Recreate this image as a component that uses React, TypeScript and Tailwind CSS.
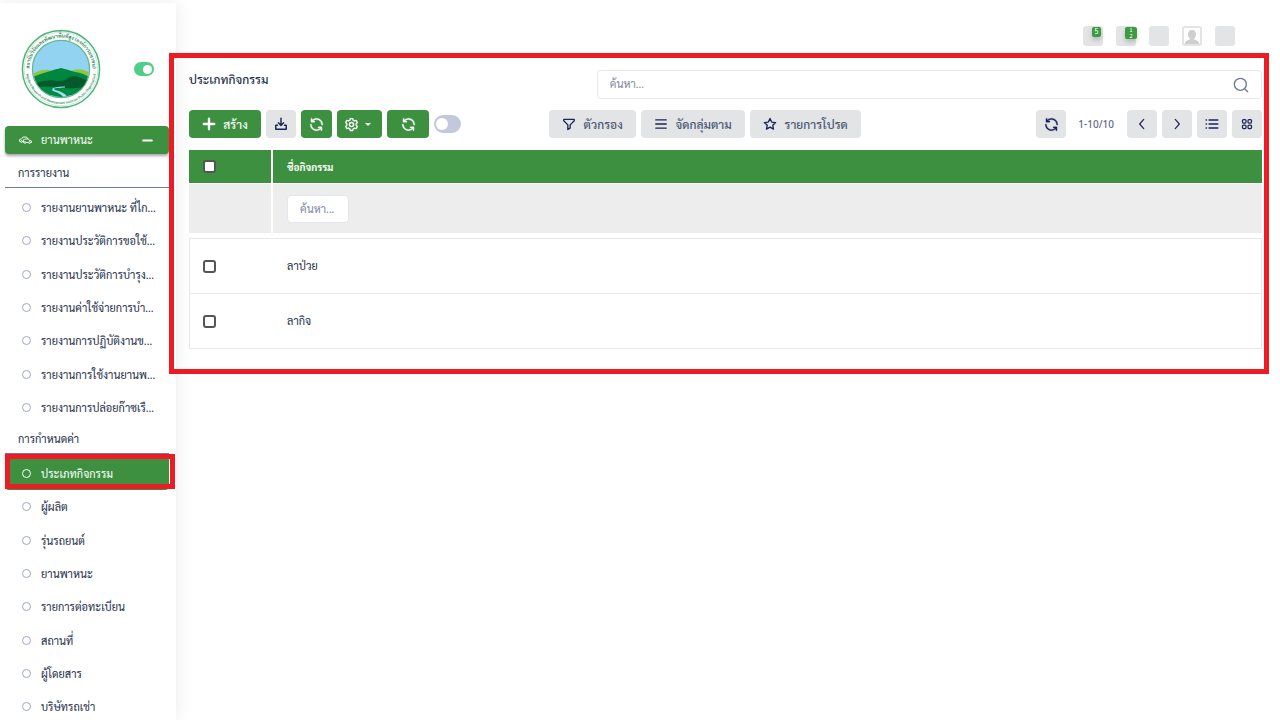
import type { ReactNode } from 'react'
import { LuMinus } from 'react-icons/lu'
import { clsx } from 'clsx'

const reports = [
  'รายงานยานพาหนะ ที่ไก...',
  'รายงานประวัติการขอใช้...',
  'รายงานประวัติการบำรุง...',
  'รายงานค่าใช้จ่ายการบำ...',
  'รายงานการปฏิบัติงานข...',
  'รายงานการใช้งานยานพ...',
  'รายงานการปล่อยก๊าซเรื...',
]

const settings = [
  'ประเภทกิจกรรม',
  'ผู้ผลิต',
  'รุ่นรถยนต์',
  'ยานพาหนะ',
  'รายการต่อทะเบียน',
  'สถานที่',
  'ผู้โดยสาร',
  'บริษัทรถเช่า',
]

const rows = ['ลาป่วย', 'ลากิจ']

function Logo() {
  return (
    <svg viewBox="0 0 80 80" className="size-20 overflow-visible" role="img" aria-label="โลโก้">
      <defs>
        <clipPath id="scene">
          <circle cx="40" cy="40" r="28" />
        </clipPath>
        <path id="ring-top" d="M9.500 48 A31.500 31.500 0 1 1 70.500 48" />
        <path id="ring-bottom" d="M5 36 A35.200 35.200 0 1 0 75 36" />
      </defs>
      <circle cx="40" cy="40" r="38.600" fill="#fff" stroke="#4db57c" strokeWidth="1.500" />
      <circle cx="40" cy="40" r="36.800" fill="none" stroke="#a9dcc0" strokeWidth="0.600" />
      <circle cx="40" cy="40" r="28.600" fill="#93d3f2" stroke="#5db98a" strokeWidth="1.200" />
      <g clipPath="url(#scene)">
        <path d="M10 46 Q22 38 32 42 L50 42 Q60 37 72 46 V60 H10Z" fill="#8cc63f" />
        <path d="M8 50 Q18 45 26 43 Q35 40 40 39 Q48 41 54 43 Q62 44 72 50 V62 H8Z" fill="#00873f" />
        <path d="M8 56 Q20 52 30 51 Q38 53 44 51 Q52 45 58 48 Q66 52 72 53 V66 H8Z" fill="#045a2b" />
        <path d="M8 59 Q28 56 44 59 Q60 60 72 55 V72 H8Z" fill="#008a45" />
        <path d="M44 58.500 Q30 58.500 34 61 Q46 64 47 70 L43 70 Q42 65 32 62 Q28 58 44 57.500Z" fill="#a8def5" />
      </g>
      <text fill="#23804c" fontSize="5" fontWeight="600" textAnchor="middle">
        <textPath href="#ring-top" startOffset="50%">
          สถาบันวิจัยและพัฒนาพื้นที่สูง (องค์การมหาชน)
        </textPath>
      </text>
      <text fill="#23804c" fontSize="3.300" fontWeight="600" textAnchor="middle">
        <textPath href="#ring-bottom" startOffset="50%">
          Highland Research and Development Institute (Public Organization)
        </textPath>
      </text>
    </svg>
  )
}

function SyncIcon() {
  return (
    <svg viewBox="0 0 24 24" className="size-[15px]" fill="currentColor" stroke="currentColor" strokeWidth="0.500">
      <path d="M19.910 15.510H15.380a1 1 0 0 0 0 2h2.400A8 8 0 0 1 4 12a1 1 0 1 0-2 0 10 10 0 0 0 16.880 7.230V21a1 1 0 0 0 2 0v-4.500a1 1 0 0 0-.970-.990ZM12 2a10 10 0 0 0-6.880 2.770V3a1 1 0 0 0-2 0v4.500a1 1 0 0 0 1 1h4.500a1 1 0 0 0 0-2h-2.400A8 8 0 0 1 20 12a1 1 0 0 0 2 0A10 10 0 0 0 12 2Z" />
    </svg>
  )
}

function StrokeIcon({ d, className = 'size-[14px]', width = 2 }: { d: string; className?: string; width?: number }) {
  return (
    <svg
      viewBox="0 0 24 24"
      className={className}
      fill="none"
      stroke="currentColor"
      strokeWidth={width}
      strokeLinecap="round"
      strokeLinejoin="round"
    >
      <path d={d} />
    </svg>
  )
}

function GearIcon() {
  return (
    <svg viewBox="0 0 24 24" className="size-[15px]" fill="none" stroke="currentColor" strokeWidth="2.200" strokeLinejoin="round">
      <path d="M10 2.500h4l.7 2.700 2 1.100 2.700-.8 2 3.500-2 1.900v2.200l2 1.900-2 3.500-2.700-.8-2 1.100-.7 2.700h-4l-.7-2.700-2-1.100-2.700.8-2-3.500 2-1.900v-2.200l-2-1.900 2-3.500 2.700.8 2-1.100Z" />
      <circle cx="12" cy="12" r="3.300" />
    </svg>
  )
}

function CarsIcon() {
  return (
    <svg viewBox="0 0 26 16" className="h-2 w-[13px]" fill="none" stroke="currentColor" strokeWidth="1.800" strokeLinejoin="round">
      <path d="M8 11H6M3 11H1V7l4-1 3-4h7l3 4" />
      <path d="M10 13H9V8l2-2h8l2 3 4 1v3h-2M19 13h-5" />
      <circle cx="5" cy="11" r="1.800" />
      <circle cx="12" cy="13" r="1.800" />
      <circle cx="21" cy="13" r="1.800" />
    </svg>
  )
}

function Button({ label, green, className, children }: { label?: string; green?: boolean; className?: string; children: ReactNode }) {
  return (
    <button
      type="button"
      aria-label={label}
      className={clsx(
        'flex h-7 items-center justify-center rounded-[4px]',
        green ? 'bg-[#3c9040] text-white' : 'bg-[#e2e4e6] text-[#1c2557]',
        className,
      )}
    >
      {children}
    </button>
  )
}

function MenuItem({ text, active }: { text: string; active?: boolean }) {
  return (
    <li className={clsx('relative nth-[3n]:mt-px', active && 'rounded bg-[#3c9040]')}>
      <a
        href="#"
        className={clsx('flex h-[33px] items-center gap-[10px] pl-[17px]', active ? 'text-white' : 'text-[#252f4a]')}
      >
        <span
          className={clsx('size-[9px] shrink-0 rounded-full border', active ? 'border-white' : 'border-[#9fa6c8]')}
        />
        <span className="truncate leading-6">{text}</span>
      </a>
      {active && (
        <span className="pointer-events-none absolute -top-[3px] -right-[6px] bottom-[1px] left-0 z-20 border-[5px] border-[#ed1c24]" />
      )}
    </li>
  )
}

function MenuGroup({ title, children }: { title: string; children: ReactNode }) {
  return (
    <>
      <h2 className="flex h-[30px] items-center border-b border-[#6d7bab] pt-[2px] pl-[13px] text-[#252f4a]">{title}</h2>
      <ul className="pt-[3px]">{children}</ul>
    </>
  )
}

function Sidebar() {
  return (
    <aside className="mt-[3px] w-44 shrink-0 bg-white pr-[7px] pl-[5px] text-[11px] shadow-[0_0_16px_rgba(0,0,0,0.09)]">
      <div className="flex items-center justify-between pt-[26px] pr-[15px] pb-[17px] pl-4">
        <Logo />
        <label className="flex">
          <input type="checkbox" defaultChecked aria-label="เมนู" className="sr-only" />
          <span className="flex h-[14px] w-5 items-center justify-end rounded-full bg-[#50cd89] pr-[2px]">
            <span className="size-[9px] rounded-full bg-white" />
          </span>
        </label>
      </div>

      <button
        type="button"
        className="flex h-7 w-full items-center rounded bg-[#3c9040] pr-[14px] pl-[14px] text-white shadow-[0_2px_3px_rgba(0,0,0,0.35)]"
      >
        <CarsIcon />
        <span className="ml-[9px]">ยานพาหนะ</span>
        <LuMinus className="ml-auto size-[15px]" strokeWidth={3} />
      </button>

      <nav className="pt-1">
        <MenuGroup title="การรายงาน">
          {reports.map((text) => (
            <MenuItem key={text} text={text} />
          ))}
        </MenuGroup>
        <MenuGroup title="การกำหนดค่า">
          {settings.map((text, index) => (
            <MenuItem key={text} text={text} active={index === 0} />
          ))}
        </MenuGroup>
      </nav>
    </aside>
  )
}

function Topbar() {
  return (
    <header className="flex h-[53px] items-center justify-end gap-[13px] pt-[19px] pr-[45px]">
      <button type="button" aria-label="การแจ้งเตือน" className="relative size-5 rounded-[3px] bg-[#e2e4e6]">
        <span className="absolute top-[1px] right-[2px] flex h-[10px] w-[9px] items-center justify-center rounded-[2px] bg-[#3c9a40] text-[7px] text-white shadow-[0_3px_5px_rgba(0,0,0,0.2)]">
          5
        </span>
      </button>
      <button type="button" aria-label="ข้อความ" className="relative size-5 rounded-[3px] bg-[#e2e4e6]">
        <span className="absolute top-[1px] -right-[1px] flex h-3 w-3 flex-col items-center justify-center rounded-[2px] bg-[#3c9a40] text-[6px] leading-[6px] text-white shadow-[0_3px_5px_rgba(0,0,0,0.2)]">
          <span>1</span>
          <span>2</span>
        </span>
      </button>
      <button type="button" aria-label="แอป" className="size-5 rounded-[3px] bg-[#e2e4e6]" />
      <button
        type="button"
        aria-label="โปรไฟล์"
        className="flex size-5 items-end justify-center rounded-[3px] border-2 border-[#e2e4e6]"
      >
        <svg viewBox="0 0 18 16" className="h-[14px] w-full" fill="#cfcfcf">
          <path d="M9 0c3.200 0 4.600 2 4.600 4.800 0 2.200-.9 3.900-2.100 4.800v1.200c2.300.9 5.300 1.400 5.800 5.200H.7C1.200 12.200 4.200 11.700 6.500 10.800V9.600C5.300 8.700 4.400 7 4.400 4.800 4.400 2 5.800 0 9 0Z" />
        </svg>
      </button>
      <button type="button" aria-label="ตั้งค่า" className="size-5 rounded-[3px] bg-[#e2e4e6]" />
    </header>
  )
}

function Toolbar() {
  return (
    <div className="mt-[11px] flex text-xs font-medium">
      <div className="flex w-1/3 items-center gap-[5px]">
        <Button green className="w-[72px] gap-[7px]">
          <StrokeIcon d="M12 3v18M3 12h18" width={4} />
          สร้าง
        </Button>
        <Button label="ดาวน์โหลด" className="w-[30px]">
          <StrokeIcon d="M12 2v12M7.500 10l4.500 4.500 4.500-4.500M6 14H3v7h18v-7h-3" width={2.5} />
        </Button>
        <Button green label="รีเฟรช" className="w-[31px]">
          <SyncIcon />
        </Button>
        <Button green label="ตั้งค่า" className="w-[45px] gap-[6px] pr-1">
          <GearIcon />
          <span className="border-x-[3px] border-t-[3px] border-x-transparent border-t-white" />
        </Button>
        <Button green label="ซิงค์" className="w-[42px]">
          <SyncIcon />
        </Button>
        <label className="flex">
          <input type="checkbox" aria-label="อัตโนมัติ" className="sr-only" />
          <span className="flex h-[18px] w-[27px] items-center rounded-full bg-[#c3c8dd] pl-[2px]">
            <span className="size-3 rounded-full bg-white" />
          </span>
        </label>
      </div>

      <div className="flex flex-1 items-center justify-between pl-[2px]">
        <div className="flex gap-[5px]">
          <Button className="w-[87px] gap-2">
            <StrokeIcon d="M3 4h18v2.500l-7 7V19l-4 2.500v-8l-7-7Z" width={2.3} />
            <span className="text-[#4b5675]">ตัวกรอง</span>
          </Button>
          <Button className="w-[104px] gap-2">
            <StrokeIcon d="M3 5h18M3 12h18M3 19h18" width={2.3} />
            <span className="text-[#4b5675]">จัดกลุ่มตาม</span>
          </Button>
          <Button className="w-[111px] gap-2">
            <StrokeIcon
              d="m12 2.500 2.900 6.200 6.800.8-5 4.600 1.300 6.700-6-3.300-6 3.300 1.300-6.700-5-4.600 6.800-.8Z"
              width={2.3}
            />
            <span className="text-[#4b5675]">รายการโปรด</span>
          </Button>
        </div>

        <div className="flex items-center gap-[5px]">
          <Button label="โหลดใหม่" className="w-[30px]">
            <SyncIcon />
          </Button>
          <span className="pt-[2px] pr-2 pl-[7px] font-['Noto_Sans',sans-serif] text-[10px] text-[#5e6a8c]">1-10/10</span>
          <Button label="ก่อนหน้า" className="w-[30px]">
            <StrokeIcon d="m15 4-7 8 7 8" />
          </Button>
          <Button label="ถัดไป" className="w-[30px]">
            <StrokeIcon d="m9 4 7 8-7 8" />
          </Button>
          <Button label="รายการ" className="w-[30px]">
            <StrokeIcon d="M2 5h.5M7 5h15M2 12h.5M7 12h15M2 19h.5M7 19h15" width={2.6} />
          </Button>
          <Button label="ตาราง" className="w-[30px]">
            <svg viewBox="0 0 24 24" className="size-3" fill="none" stroke="currentColor" strokeWidth="2.500">
              <rect x="3" y="3" width="7" height="7" rx="2" />
              <rect x="14" y="3" width="7" height="7" rx="2" />
              <rect x="3" y="14" width="7" height="7" rx="2" />
              <rect x="14" y="14" width="7" height="7" rx="2" />
            </svg>
          </Button>
        </div>
      </div>
    </div>
  )
}

function Check({ label }: { label: string }) {
  return (
    <input
      type="checkbox"
      aria-label={label}
      className="block size-[13px] appearance-none rounded-[3px] border-2 border-[#555] bg-white"
    />
  )
}

function ActivityTable() {
  return (
    <table className="mt-3 w-full border-separate border-spacing-0 text-left text-[11px] text-[#252f4a]">
      <thead>
        <tr className="h-[34px] bg-[#3c9040] text-white">
          <th className="w-[84px] border-r-2 border-b border-white pl-[14px]">
            <Check label="เลือกทั้งหมด" />
          </th>
          <th className="border-b border-white pl-[14px] text-[10px] font-bold">ชื่อกิจกรรม</th>
        </tr>
        <tr className="h-[54px] bg-[#ededed]">
          <td className="border-r-2 border-b-[5px] border-white" />
          <td className="border-b-[5px] border-white pl-[14px]">
            <input
              type="text"
              aria-label="ค้นหาชื่อกิจกรรม"
              placeholder="ค้นหา..."
              className="block h-7 w-[62px] rounded-[4px] border border-[#e4e6ef] bg-white pr-1 pl-3 text-[11px] placeholder:text-[#7e87a5]"
            />
          </td>
        </tr>
      </thead>
      <tbody>
        {rows.map((row) => (
          <tr key={row} className="group h-[55px] first:h-14">
            <td className="border-b border-l border-[#e6e8f0] pl-[13px] group-first:border-t">
              <Check label={row} />
            </td>
            <td className="border-r border-b border-[#e6e8f0] pl-[14px] group-first:border-t">{row}</td>
          </tr>
        ))}
      </tbody>
    </table>
  )
}

export default function App() {
  return (
    <div className="flex h-screen overflow-hidden bg-white font-['Sarabun','Noto_Sans',sans-serif]">
      <Sidebar />
      <main className="min-w-0 flex-1">
        <Topbar />
        <section className="relative pt-[17px] pr-[18px] pb-[25px] pl-[13px]">
          <div className="flex items-center justify-between">
            <h1 className="pb-[11px] text-xs font-medium text-[#252f4a]">ประเภทกิจกรรม</h1>
            <label className="flex h-[29px] w-[62%] items-center rounded-[4px] border border-[#e6e8f0] pr-3 pl-3">
              <input
                type="text"
                aria-label="ค้นหา"
                placeholder="ค้นหา..."
                className="min-w-0 flex-1 text-[11px] outline-none placeholder:text-[#7e87a5]"
              />
              <svg
                viewBox="0 0 24 24"
                className="size-4 text-[#6b7896]"
                fill="none"
                stroke="currentColor"
                strokeWidth="2"
                strokeLinecap="round"
              >
                <circle cx="11" cy="11" r="9" />
                <path d="m18 18 4 4" />
              </svg>
            </label>
          </div>
          <Toolbar />
          <ActivityTable />
          <span className="pointer-events-none absolute top-0 right-[11px] bottom-0 -left-[7px] z-20 border-[5px] border-[#ed1c24]" />
        </section>
      </main>
    </div>
  )
}
